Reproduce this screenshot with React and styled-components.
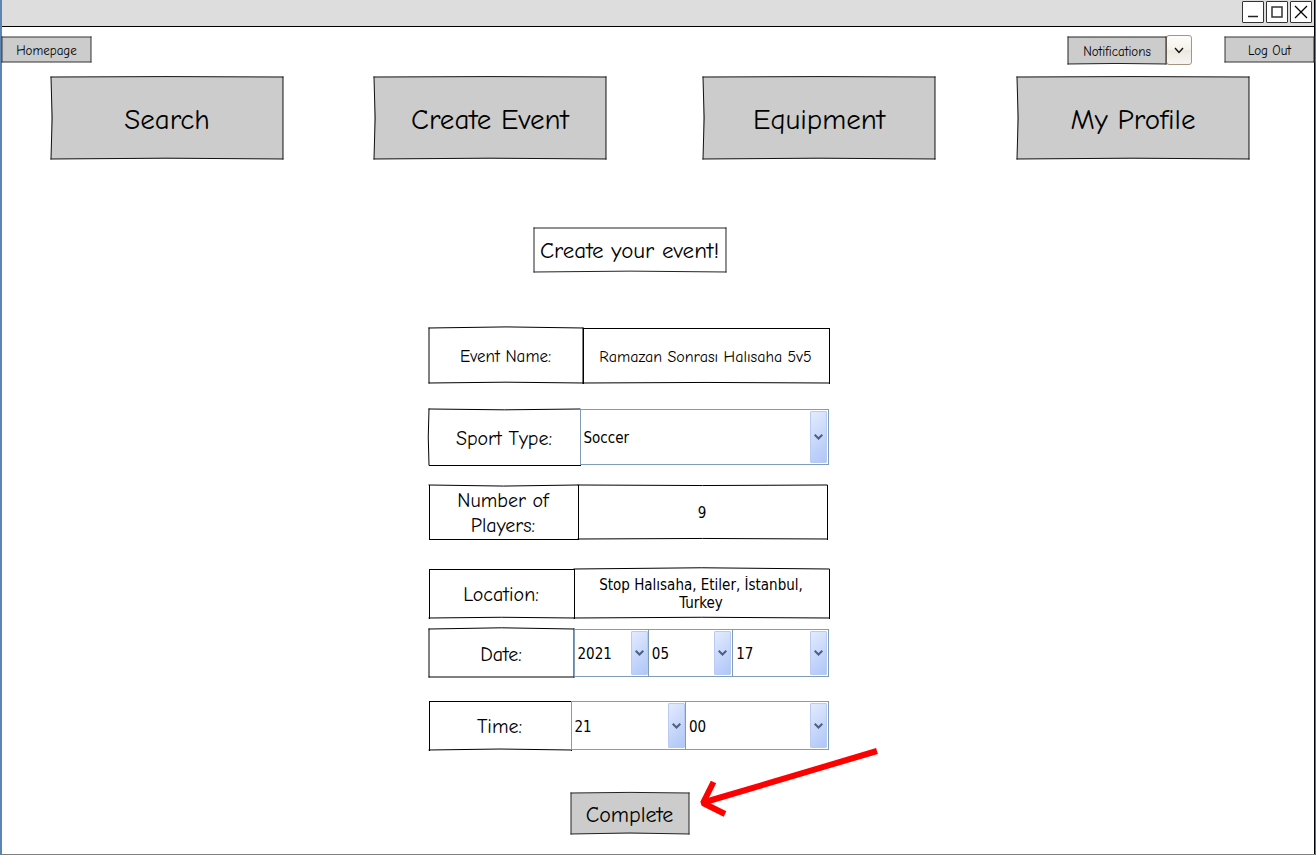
import React from "react";
import styled, { createGlobalStyle } from "styled-components";

const hand = '"Comic Sans MS", "Comic Neue", "Noto Sans", sans-serif';
const plain = 'Tahoma, "DejaVu Sans Condensed", "Noto Sans", sans-serif';

const GlobalStyle = createGlobalStyle`
  *, *::before, *::after { box-sizing: border-box; }
  body { margin: 0; background: #fff; color: #000; font-family: ${hand}; }
  button, input, select, textarea { font: inherit; color: inherit; margin: 0; }
`;

const Window = styled.div`
  min-height: 100vh;
  display: flex;
  flex-direction: column;
  border-left: 2px solid #5b86b3;
  border-right: 1px solid #4a7dae;
  border-bottom: 1px solid #7f7f7f;
`;

const Inner = styled.div`
  flex: 1;
  display: flex;
  flex-direction: column;
  border-right: 1px solid #000;
`;

const TitleBar = styled.header`
  height: 27px;
  display: flex;
  justify-content: flex-end;
  align-items: flex-start;
  gap: 2px;
  padding: 1px 2px 0 0;
  background: #ddd;
  border-bottom: 1px solid #000;
`;

const WindowButton = styled.button`
  width: 22px;
  height: 22px;
  padding: 0;
  border: 1px solid #333;
  border-radius: 1px;
  background: #fff;
  svg { display: block; }
`;

const TopBar = styled.div`
  display: flex;
  align-items: flex-start;
  padding-top: 8px;
  height: 50px;
`;

const Spacer = styled.div`
  flex: 1;
`;

const Frame = styled.svg`
  position: absolute;
  inset: 0;
  width: 100%;
  height: 100%;
  overflow: visible;
  pointer-events: none;
  path {
    fill: none;
    stroke: ${(p) => p.$ink || "#000"};
    stroke-width: 1px;
    vector-effect: non-scaling-stroke;
  }
`;

const SketchButton = styled.button`
  position: relative;
  display: block;
  width: ${(p) => p.$w};
  height: ${(p) => p.$h};
  padding: 2px 0 0;
  border: 0;
  background: #ccc;
  font-size: ${(p) => p.$size};
  white-space: nowrap;
`;

const TopButton = styled(SketchButton)`
  margin-top: 2px;
`;

const NotificationGroup = styled.div`
  display: flex;
  margin-right: 33px;
`;

const DropButton = styled.button`
  width: 26px;
  height: 30px;
  padding: 0;
  border: 1px solid #a6967f;
  border-radius: 3px;
  background: linear-gradient(#fdfcfa, #f4f1eb 50%, #ece8e0 51%, #f7f5f1);
  svg { display: block; margin: auto; }
`;

const Nav = styled.nav`
  display: grid;
  grid-template-columns: 323fr 329fr 314fr 233fr;
  padding: 0 64px 0 49px;
`;

const Main = styled.main`
  position: relative;
  display: flex;
  flex-direction: column;
  align-items: center;
  padding: 69px 57px 20px 0;
`;

const Heading = styled.h1`
  position: relative;
  width: 192px;
  height: 44px;
  margin: 0 0 56px;
  font-size: 23px;
  font-weight: 400;
  line-height: 46px;
  text-align: center;
  white-space: nowrap;
`;

const Form = styled.form`
  width: 402px;
  display: flex;
  flex-direction: column;
`;

const Row = styled.div`
  display: flex;
  height: ${(p) => p.$h};
  margin-bottom: ${(p) => p.$gap};
  padding-right: ${(p) => p.$inset || "2px"};
`;

const Label = styled.label`
  position: relative;
  flex: none;
  width: ${(p) => p.$w};
  display: flex;
  align-items: center;
  justify-content: center;
  padding: 2px 20px 0;
  font-size: ${(p) => p.$size || "20px"};
  line-height: 25px;
  text-align: center;
`;

const Field = styled.div`
  position: relative;
  flex: 1;
  display: flex;
  align-items: center;
`;

const TextInput = styled.input`
  width: 100%;
  height: 100%;
  padding: 2px 4px 0;
  border: 0;
  background: transparent;
  text-align: center;
  font-family: ${(p) => (p.$hand ? hand : plain)};
  font-size: ${(p) => (p.$hand ? "16px" : "15px")};
`;

const TextArea = styled.textarea`
  width: 100%;
  height: 36px;
  padding: 0 20px;
  border: 0;
  background: transparent;
  resize: none;
  overflow: hidden;
  text-align: center;
  font-family: ${plain};
  font-size: 15px;
  line-height: 18px;
`;

const SelectBox = styled.div`
  position: relative;
  flex: ${(p) => p.$flex};
  margin-left: ${(p) => (p.$joined ? "-1px" : "0")};
`;

const Select = styled.select`
  appearance: none;
  display: block;
  width: 100%;
  height: 100%;
  padding: 2px 22px 0 3px;
  border: 1px solid #7f9db9;
  border-radius: 0;
  background: #fff;
  font-family: ${plain};
  font-size: 15px;
`;

const Arrow = styled.span`
  position: absolute;
  top: 2px;
  bottom: 2px;
  right: ${(p) => (p.$flush ? "1px" : "2px")};
  width: 17px;
  display: flex;
  align-items: center;
  justify-content: center;
  border: 1px solid #b9cbf3;
  border-radius: 1px;
  background: linear-gradient(135deg, #e3ebfe, #c9d8fb 50%, #afc6f7);
  pointer-events: none;
`;

const CompleteRow = styled.div`
  position: relative;
  align-self: flex-start;
  margin-left: 142px;
`;

const Pointer = styled.svg`
  position: absolute;
  left: 128px;
  top: -46px;
  pointer-events: none;
`;

// Hand-drawn outline; each bow value bends one side in or out, straight sides stay sharp.
function Outline({ t = 0, r = 0, b = 0, l = 0, ink }) {
  const sides = [
    [t, `M0 0Q50 ${t} 100 0`],
    [r, `M100 0Q${100 + r} 50 100 100`],
    [b, `M100 100Q50 ${100 + b} 0 100`],
    [l, `M0 100Q${l} 50 0 0`],
  ];
  return (
    <Frame viewBox="0 0 100 100" preserveAspectRatio="none" aria-hidden="true" $ink={ink}>
      {sides.map(([bow, d]) => (
        <path key={d} d={d} strokeLinecap="square" shapeRendering={bow || ink ? "auto" : "crispEdges"} />
      ))}
    </Frame>
  );
}

function XpSelect({ id, label, value, options, flex = "1", joined, flush }) {
  return (
    <SelectBox $flex={flex} $joined={joined}>
      <Select id={id} aria-label={label} defaultValue={value}>
        {options.map((o) => (
          <option key={o}>{o}</option>
        ))}
      </Select>
      <Arrow $flush={flush}>
        <svg width="9" height="6" viewBox="0 0 9 6" aria-hidden="true">
          <path d="M0.7 0.7L4.5 4.5L8.3 0.7" fill="none" stroke="#4d6185" strokeWidth="2" />
        </svg>
      </Arrow>
    </SelectBox>
  );
}

const navItems = ["Search", "Create Event", "Equipment", "My Profile"];

export default function App() {
  return (
    <Window>
      <GlobalStyle />
      <Inner>
        <TitleBar>
          <WindowButton aria-label="Minimize">
            <svg width="20" height="20"><path d="M5 14.5H15" stroke="#222" fill="none" strokeWidth="1.5" /></svg>
          </WindowButton>
          <WindowButton aria-label="Maximize">
            <svg width="20" height="20"><rect x="5" y="5" width="10" height="10" stroke="#333" fill="none" strokeWidth="1.5" /></svg>
          </WindowButton>
          <WindowButton aria-label="Close">
            <svg width="20" height="20"><path d="M4 4L16 16M16 4L4 16" stroke="#000" fill="none" strokeWidth="1.3" /></svg>
          </WindowButton>
        </TitleBar>
        <TopBar>
          <TopButton $w="89px" $h="25px" $size="13px">Homepage<Outline ink="#333" /></TopButton>
          <Spacer />
          <NotificationGroup>
            <TopButton $w="98px" $h="27px" $size="13px">Notifications<Outline b={-4} ink="#222" /></TopButton>
            <DropButton aria-label="Open notifications">
              <svg width="10" height="7" viewBox="0 0 10 7"><path d="M1 1L5 5.5L9 1" fill="none" stroke="#111" strokeWidth="1.4" /></svg>
            </DropButton>
          </NotificationGroup>
          <TopButton $w="89px" $h="25px" $size="13px">Log Out<Outline ink="#333" /></TopButton>
        </TopBar>
        <Nav>
          {navItems.map((n) => (
            <SketchButton key={n} $w="232px" $h="82px" $size="29px">
              {n}
              <Outline t={-1} b={-2} l={1} ink="#111" />
            </SketchButton>
          ))}
        </Nav>
        <Main>
          <Heading>Create your event!<Outline b={-4} ink="#222" /></Heading>
          <Form onSubmit={(e) => e.preventDefault()}>
            <Row $h="55px" $gap="26px">
              <Label $w="154px" $size="17px" htmlFor="name">Event Name:<Outline t={-4} b={-3} /></Label>
              <Field><TextInput id="name" $hand defaultValue="Ramazan Sonrası Halısaha 5v5" /><Outline b={-2} /></Field>
            </Row>
            <Row $h="56px" $gap="20px">
              <Label $w="151px" htmlFor="sport">Sport Type:<Outline t={3} l={-1} /></Label>
              <XpSelect id="sport" value="Soccer" options={["Soccer", "Basketball", "Tennis"]} />
            </Row>
            <Row $h="54px" $gap="30px" $inset="4px">
              <Label $w="149px" htmlFor="players">Number of Players:<Outline t={4} /></Label>
              <Field><TextInput id="players" defaultValue="9" /><Outline t={2} b={-2} /></Field>
            </Row>
            <Row $h="49px" $gap="11px">
              <Label $w="145px" htmlFor="location">Location:<Outline b={-3} /></Label>
              <Field><TextArea id="location" rows={2} defaultValue="Stop Halısaha, Etiler, İstanbul, Turkey" /><Outline t={-5} b={-3} /></Field>
            </Row>
            <Row $h="48px" $gap="24px">
              <Label $w="145px" htmlFor="year">Date:<Outline t={-5} /></Label>
              <XpSelect id="year" label="Year" value="2021" options={["2021", "2022"]} flex="75" flush />
              <XpSelect label="Month" value="05" options={["05", "06"]} flex="85" joined />
              <XpSelect label="Day" value="17" options={["17", "18"]} flex="96" joined />
            </Row>
            <Row $h="49px" $gap="43px">
              <Label $w="142px" htmlFor="hour">Time:<Outline b={-4} /></Label>
              <XpSelect id="hour" label="Hour" value="21" options={["21", "22"]} flex="115" flush />
              <XpSelect label="Minute" value="00" options={["00", "30"]} flex="143" joined />
            </Row>
            <CompleteRow>
              <SketchButton type="submit" $w="118px" $h="41px" $size="22px">Complete<Outline t={-3} b={-5} ink="#222" /></SketchButton>
              <Pointer width="180" height="72" viewBox="0 0 180 72" aria-hidden="true">
                <path d="M178 4L6 55" stroke="#f00" strokeWidth="6" fill="none" />
                <path d="M14.5 35L4 56L26 67" stroke="#f00" strokeWidth="6" fill="none" strokeLinejoin="bevel" />
              </Pointer>
            </CompleteRow>
          </Form>
        </Main>
      </Inner>
    </Window>
  );
}
